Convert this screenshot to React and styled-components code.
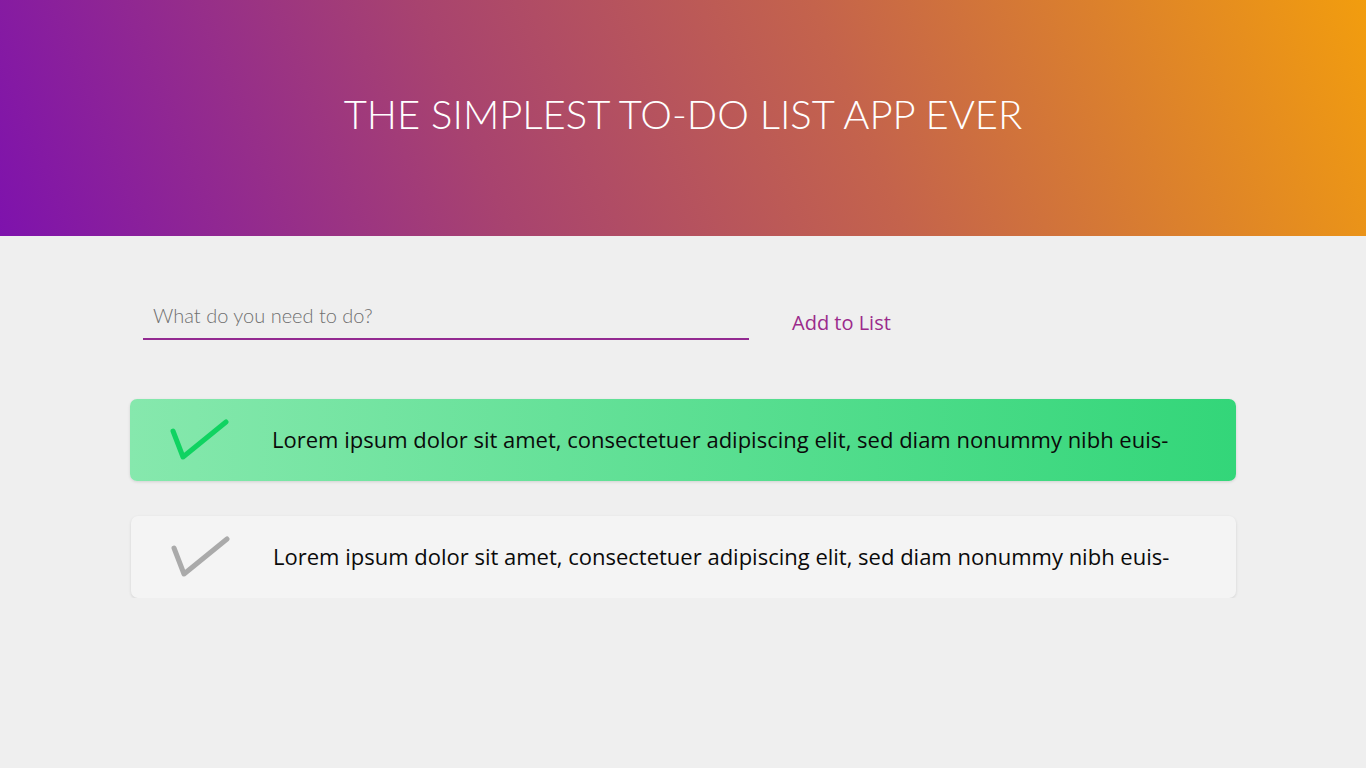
import React from 'react'
import styled, { createGlobalStyle } from 'styled-components'

const GlobalStyle = createGlobalStyle`
  html, body {
    margin: 0;
    padding: 0;
    background: #efefef;
  }
  * {
    box-sizing: border-box;
  }
`;

const Header = styled.header`
  height: 236px;
  display: grid;
  place-items: center;
  background: linear-gradient(68deg, #7e12ad 0%, #a8436f 35%, #c4634c 62%, #f29d0e 100%);
  h1 {
    margin: 0;
    padding-bottom: 8px;
    font-family: 'Lato', sans-serif;
    font-weight: 300;
    font-size: 40px;
    color: #fff;
  }
`;

const Main = styled.main`
  padding: 0 130px;
`;

const Form = styled.form`
  display: flex;
  align-items: flex-end;
  padding: 58px 0 0 13px;
  gap: 43px;
`;

const Input = styled.input`
  width: 606px;
  height: 46px;
  padding: 0 10px 2px;
  border: none;
  border-bottom: 2px solid #932a91;
  background: transparent;
  outline: none;
  font-family: 'Lato', sans-serif;
  font-weight: 300;
  font-size: 20px;
  color: #555;
  &::placeholder {
    color: #707070;
  }
`;

const AddButton = styled.button`
  border: none;
  background: none;
  padding: 0 0 4px;
  font-family: 'Open Sans', sans-serif;
  font-size: 20px;
  color: #9b2a8b;
  cursor: pointer;
`;

const List = styled.ul`
  list-style: none;
  margin: 59px 0 0;
  padding: 0;
  display: flex;
  flex-direction: column;
  gap: 35px;
  width: 1106px;
`;

const Item = styled.li`
  height: 82px;
  display: flex;
  align-items: center;
  gap: 42px;
  padding-left: 40px;
  padding-bottom: 2px;
  border-radius: 7px;
  margin-left: ${p => (p.$done ? '0' : '1px')};
  background: ${p => (p.$done ? 'linear-gradient(to right, #86e8ad, #33d679)' : '#f4f4f4')};
  box-shadow: 0 1px 3px rgba(0, 0, 0, 0.12);
  font-family: 'Open Sans', sans-serif;
  font-size: 22px;
  color: #0a0a0a;
`;

const Check = ({ color }) => (
  <svg width="60" height="44" viewBox="0 0 60 44">
    <path d="M3 14 L13 40 L56 5" fill="none" stroke={color} strokeWidth="5" strokeLinecap="round" strokeLinejoin="round" />
  </svg>
);

const text = 'Lorem ipsum dolor sit amet, consectetuer adipiscing elit, sed diam nonummy nibh euis-';

export default function App() {
  return (
    <>
      <GlobalStyle />
      <Header>
        <h1>THE SIMPLEST TO-DO LIST APP EVER</h1>
      </Header>
      <Main>
        <Form onSubmit={e => e.preventDefault()}>
          <Input placeholder="What do you need to do?" />
          <AddButton type="submit">Add to List</AddButton>
        </Form>
        <List>
          <Item $done>
            <Check color="#10d361" />
            <span>{text}</span>
          </Item>
          <Item>
            <Check color="#aaaaaa" />
            <span>{text}</span>
          </Item>
        </List>
      </Main>
    </>
  )
}
